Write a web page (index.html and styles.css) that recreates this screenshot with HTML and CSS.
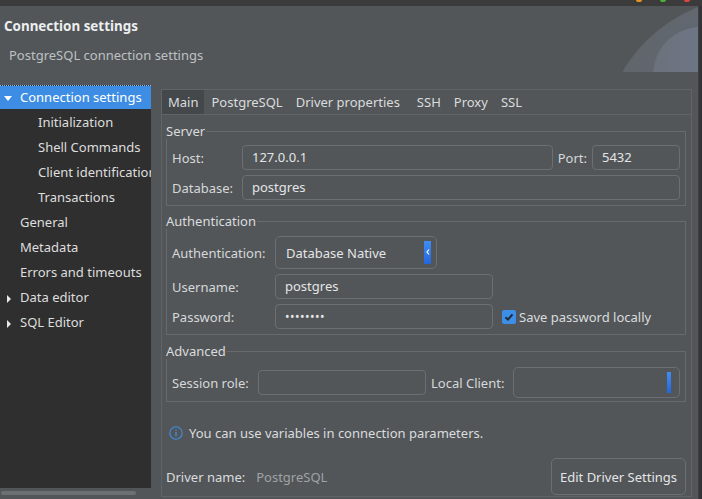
FILE: index.html
```html
<!DOCTYPE html>
<html>
<head>
<meta charset="utf-8">
<title>Connection settings</title>
<link rel="stylesheet" href="styles.css">
</head>
<body>
<div class="window">
  <div class="titlebar">
    <span class="wbtn orange"></span><span class="wbtn green"></span><span class="wbtn red"></span>
  </div>
  <div class="frame">
    <div class="page">
      <header class="header">
        <div class="htext">
          <div class="title">Connection settings</div>
          <div class="subtitle">PostgreSQL connection settings</div>
        </div>
        <svg class="banner" width="75" height="66" viewBox="0 0 75 66">
          <defs>
            <linearGradient id="g1" x1="0" y1="0" x2="1" y2="0">
              <stop offset="0" stop-color="#60656a"/>
              <stop offset="1" stop-color="#666d7c"/>
            </linearGradient>
            <linearGradient id="g2" x1="0" y1="0" x2="1" y2="0">
              <stop offset="0" stop-color="#6c727b"/>
              <stop offset="1" stop-color="#6f7a92"/>
            </linearGradient>
          </defs>
          <circle cx="132" cy="144" r="154" fill="url(#g1)"/>
          <circle cx="78" cy="69" r="48" fill="url(#g2)"/>
        </svg>
      </header>
      <div class="body">
        <aside class="nav">
          <ul class="tree">
            <li class="row selected"><span class="twisty down"></span>Connection settings</li>
            <li class="row child">Initialization</li>
            <li class="row child">Shell Commands</li>
            <li class="row child">Client identification</li>
            <li class="row child">Transactions</li>
            <li class="row">General</li>
            <li class="row">Metadata</li>
            <li class="row">Errors and timeouts</li>
            <li class="row"><span class="twisty right"></span>Data editor</li>
            <li class="row"><span class="twisty right"></span>SQL Editor</li>
          </ul>
          <div class="hscroll"><div class="thumb"></div></div>
        </aside>
        <section class="folder">
          <div class="tabs">
            <span class="tab active">Main</span>
            <span class="tab">PostgreSQL</span>
            <span class="tab tab-wide">Driver properties</span>
            <span class="tab">SSH</span>
            <span class="tab">Proxy</span>
            <span class="tab">SSL</span>
          </div>
          <div class="tabpage">
            <fieldset class="group server">
              <legend>Server</legend>
              <label class="lbl">Host:</label>
              <div class="field">127.0.0.1</div>
              <label class="lbl port-lbl">Port:</label>
              <div class="field">5432</div>
              <label class="lbl">Database:</label>
              <div class="field span3">postgres</div>
            </fieldset>

            <fieldset class="group auth">
              <legend>Authentication</legend>
              <label class="lbl">Authentication:</label>
              <div class="combo">
                <span class="combo-text">Database Native</span>
                <span class="spin">
                  <svg width="7" height="23" viewBox="0 0 7 23"><path d="M5 8.5 L3 11 L5 13.5" fill="none" stroke="#fff" stroke-width="1.2"/></svg>
                </span>
              </div>
              <span></span>
              <label class="lbl">Username:</label>
              <div class="field">postgres</div>
              <span></span>
              <label class="lbl">Password:</label>
              <div class="field pw">••••••••</div>
              <label class="check">
                <span class="box">
                  <svg width="14" height="14" viewBox="0 0 14 14"><path d="M3.5 7.2 L6 9.6 L10.5 4.3" fill="none" stroke="#1f2a38" stroke-width="2"/></svg>
                </span>
                Save password locally
              </label>
            </fieldset>

            <fieldset class="group adv">
              <legend>Advanced</legend>
              <label class="lbl">Session role:</label>
              <div class="field"></div>
              <label class="lbl">Local Client:</label>
              <div class="combo wide"><span class="bar"></span></div>
            </fieldset>

            <div class="info">
              <svg class="info-icon" width="14" height="14" viewBox="0 0 14 14">
                <circle cx="7" cy="7" r="6.2" fill="none" stroke="#3d8fe0" stroke-width="1.1"/>
                <path d="M7 6 V10.5" stroke="#3d8fe0" stroke-width="1.3"/>
                <circle cx="7" cy="4" r="0.8" fill="#3d8fe0"/>
              </svg>
              <span>You can use variables in connection parameters.</span>
            </div>

            <div class="driver">
              <div class="dname"><span>Driver name:</span><span class="dval">PostgreSQL</span></div>
              <button class="btn">Edit Driver Settings</button>
            </div>
          </div>
        </section>
      </div>
    </div>
    <div class="edge"></div>
  </div>
</div>
</body>
</html>
```

FILE: styles.css
```css
* { box-sizing: border-box; }
html, body { margin: 0; padding: 0; }
body {
  background: #525659;
  font-family: "Noto Sans", "Open Sans", sans-serif;
  font-size: 13px;
  color: #dadcdd;
  overflow: hidden;
}
.window { width: 702px; height: 499px; display: flex; flex-direction: column; }

.titlebar {
  height: 6px;
  background: #3b3b3b;
  display: flex;
  justify-content: flex-end;
  align-items: flex-start;
  gap: 18px;
  padding-right: 12px;
}
.wbtn { width: 6px; height: 2px; border-radius: 0 0 2px 2px; }
.orange { background: #e8941f; }
.green { background: #4cae3a; }
.red { background: #e0443e; }

.frame { flex: 1; display: flex; min-height: 0; }
.page { width: 698px; display: flex; flex-direction: column; }
.edge { width: 4px; background: #333435; border-left: 1px solid #3e4143; }

.header { height: 79px; display: flex; justify-content: space-between; align-items: flex-start; }
.htext { padding-left: 4px; }
.title { font-weight: bold; font-size: 13.4px; line-height: 18px; margin-top: 11px; color: #eceeef; }
.subtitle { font-size: 13px; line-height: 18px; margin-top: 11px; padding-left: 5px; color: #bec1c3; }
.banner { display: block; }

.body { flex: 1; display: flex; min-height: 0; }

.nav { width: 151px; display: flex; flex-direction: column; }
.tree { flex: 1; margin: 0; padding: 0; list-style: none; background: #2f2f2f; color: #dedede; }
.row { height: 25px; line-height: 25px; padding-left: 20px; white-space: nowrap; overflow: hidden; }
.row.child { padding-left: 38px; }
.row.selected { background: linear-gradient(#3d8de4 0 23px, transparent 23px); color: #fff; border-top: 1px dotted #8dbcf2; line-height: 23px; }
.twisty { display: inline-block; width: 0; height: 0; vertical-align: middle; }
.twisty.down { border-left: 4px solid transparent; border-right: 4px solid transparent; border-top: 5px solid #fff; margin-left: -16px; margin-right: 8px; }
.twisty.right { border-top: 4px solid transparent; border-bottom: 4px solid transparent; border-left: 4px solid #e8e8e8; margin-left: -13px; margin-right: 9px; }
.hscroll { height: 11px; padding: 3px 0 0 1px; }
.thumb { width: 135px; height: 4px; border-radius: 2px; background: #6d7072; }

.folder {
  width: 531px;
  margin: 4px 0 2px 10px;
  border: 1px solid #606467;
  display: flex;
  flex-direction: column;
}
.tabs { height: 25px; display: flex; border-bottom: 1px solid #606467; }
.tab { padding: 0 6px 0 7px; line-height: 24px; color: #dadcdd; }
.tab.active { background: #44484b; padding-left: 6px; }
.tab.tab-wide { padding-right: 10px; }

.tabpage { flex: 1; display: flex; flex-direction: column; padding: 8px 5px 1px 4px; }

.group {
  margin: 0 0 7px 0;
  border: 1px solid #676b6e;
  padding: 6px 5px 5px 5px;
  display: grid;
  align-items: center;
  row-gap: 5px;
  column-gap: 5px;
  min-width: 0;
}
.group legend { padding: 0 1px 0 0; margin-left: -6px; line-height: 16px; color: #dadcdd; }
.lbl { color: #d6d8d9; white-space: nowrap; }

.field {
  height: 25px;
  border: 1px solid #6b6f72;
  border-radius: 4px;
  padding: 0 9px;
  line-height: 23px;
  color: #e4e5e6;
  white-space: nowrap;
  overflow: hidden;
}
.field.pw { font-size: 12px; letter-spacing: 0.5px; }

.server { grid-template-columns: 65px 1fr auto 88px; }
.span3 { grid-column: 2 / 5; }

.auth { grid-template-columns: 98px 218px 1fr; padding-top: 7px; margin-bottom: 8px; }
.combo {
  width: 162px;
  height: 33px;
  border: 1px solid #6b6f72;
  border-radius: 5px;
  display: flex;
  align-items: center;
  justify-content: space-between;
  padding: 0 5px 0 10px;
}
.combo-text { color: #e4e5e6; }
.spin {
  width: 7px;
  height: 23px;
  background: linear-gradient(#3f8ef2, #2366dc);
  display: block;
}
.spin svg { display: block; }
.check { display: flex; align-items: center; gap: 3px; margin-left: 4px; white-space: nowrap; color: #dadcdd; }
.box { width: 14px; height: 14px; border-radius: 2px; background: #3d8ee6; display: block; }
.box svg { display: block; }

.adv { grid-template-columns: 81px 168px 77px 1fr; padding-top: 8px; padding-bottom: 3px; margin-bottom: 0; }
.combo.wide { width: auto; height: 31px; justify-content: flex-end; padding: 0 8px 0 0; }
.bar { width: 4px; height: 21px; background: linear-gradient(#3f8ef2, #2366dc); display: block; }

.info { display: flex; align-items: center; gap: 6px; height: 18px; margin-top: 22px; padding-left: 3px; color: #dadcdd; }
.info-icon { display: block; }

.driver { margin-top: auto; display: flex; justify-content: space-between; align-items: center; }
.dname { display: flex; gap: 11px; }
.dval { color: #9fa3a5; }
.btn {
  height: 37px;
  padding: 0 8px;
  border: 1px solid #6b6f72;
  border-radius: 5px;
  background: transparent;
  color: #e4e5e6;
  font: inherit;
  font-size: 13px;
}
```
